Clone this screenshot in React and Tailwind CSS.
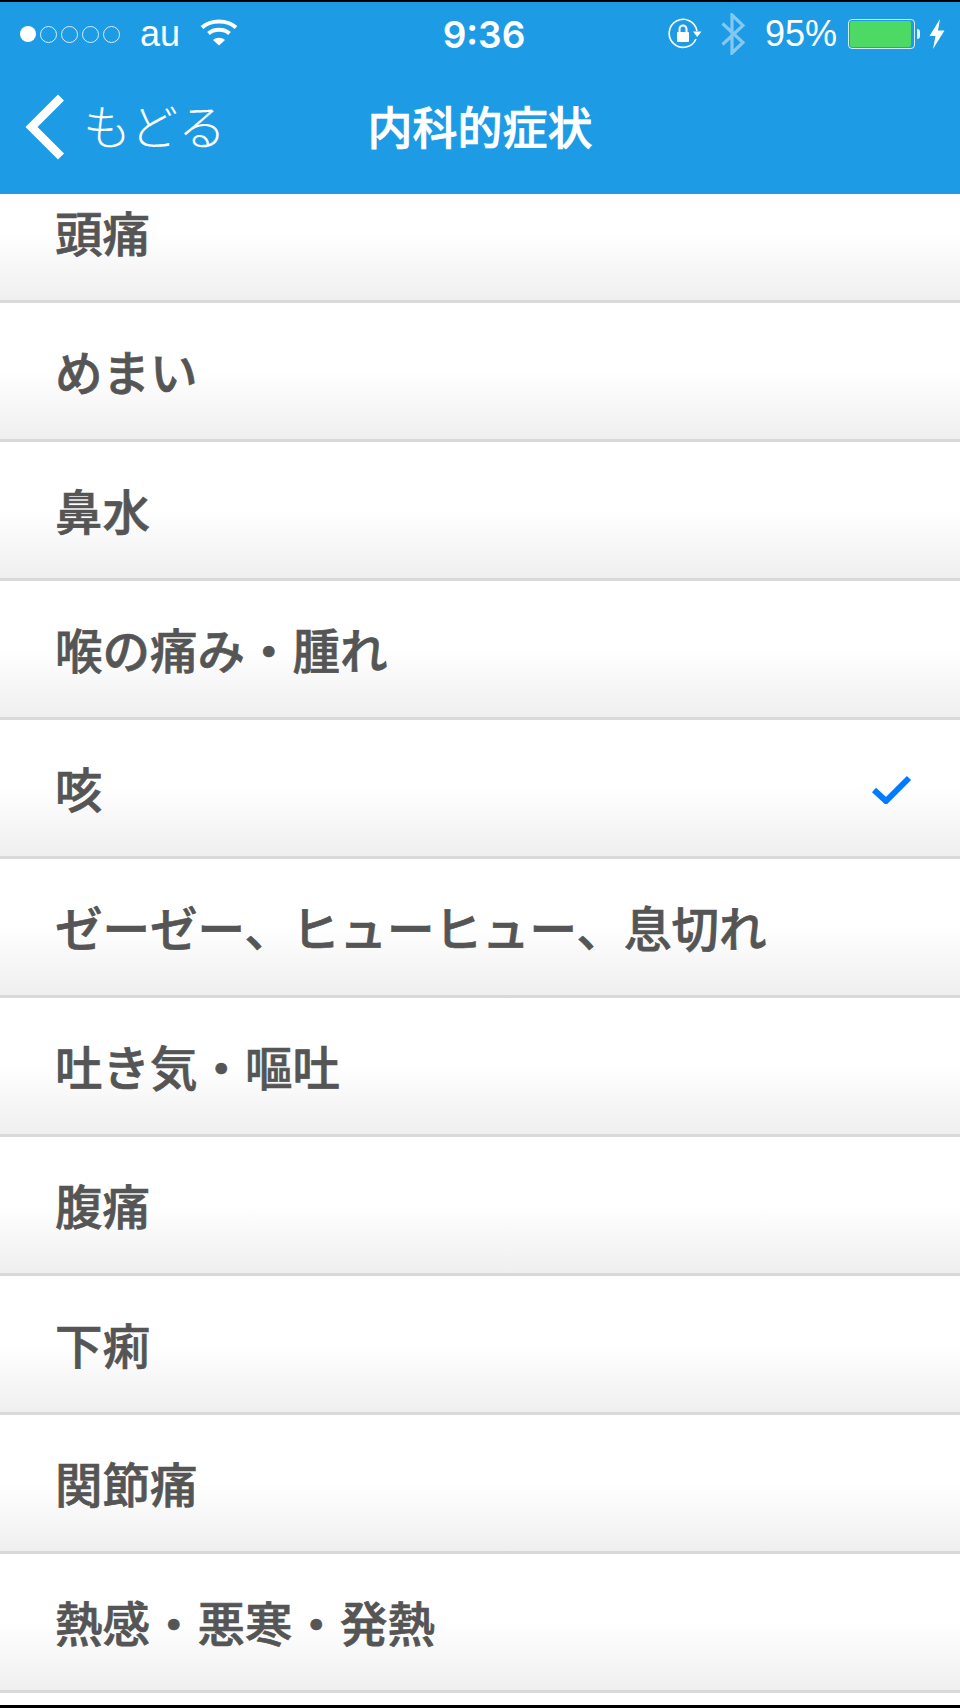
const rows = [
  { label: '頭痛' },
  { label: 'めまい' },
  { label: '鼻水' },
  { label: '喉の痛み・腫れ' },
  { label: '咳', checked: true },
  { label: 'ゼーゼー、ヒューヒュー、息切れ' },
  { label: '吐き気・嘔吐' },
  { label: '腹痛' },
  { label: '下痢' },
  { label: '関節痛' },
  { label: '熱感・悪寒・発熱' },
];

const SignalDots = () => (
  <div className="flex items-center gap-[4px]">
    <span className="w-[16px] h-[16px] rounded-full bg-white" />
    {[0, 1, 2, 3].map((i) => (
      <span key={i} className="w-[17px] h-[17px] rounded-full border border-white/80" />
    ))}
  </div>
);

const Wifi = () => (
  <svg width="38" height="28" viewBox="0 0 38 28" fill="none" stroke="white" strokeWidth="4">
    <path d="M2 9.5 C 11 1.5, 27 1.5, 36 9.5" />
    <path d="M8.5 15.5 C 14 10.5, 24 10.5, 29.5 15.5" />
    <path d="M13 22 L19 27.5 L25 22 C 21.5 19, 16.5 19, 13 22 Z" fill="white" stroke="none" />
  </svg>
);

const RotationLock = () => (
  <svg width="34" height="32" viewBox="0 0 34 32" fill="none">
    <path d="M28 21 A 14 14 0 1 1 29 13" stroke="white" strokeWidth="1.6" />
    <path d="M25 13.5 L33.5 13.5 L29.2 19 Z" fill="white" />
    <rect x="9" y="14" width="12" height="10" rx="1" fill="white" />
    <path d="M11.5 14 V11 A 3.5 3.5 0 0 1 18.5 11 V14" stroke="white" strokeWidth="2" />
  </svg>
);

const Bluetooth = () => (
  <svg width="24" height="42" viewBox="0 0 24 42" fill="none" stroke="white" strokeOpacity="0.45" strokeWidth="3.2">
    <path d="M1.5 10.5 L22 29.5 L11 40 V2 L22 12.5 L1.5 31.5" />
  </svg>
);

const Battery = () => (
  <div className="flex items-center gap-[2px]">
    <div className="w-[67px] h-[30px] rounded-[4px] border border-white/80 p-[1px] flex">
      <div className="w-[61px] rounded-[2px] bg-[#4cd964]" />
    </div>
    <div className="w-[3px] h-[10px] rounded-r-full bg-white/90" />
  </div>
);

const Bolt = () => (
  <svg width="16" height="30" viewBox="0 0 16 30" fill="white">
    <path d="M11 0 L0.5 17 H6.5 L4 30 L15.5 11.5 H9 Z" />
  </svg>
);

const StatusBar = () => (
  <div className="h-[62px] pt-[2px] grid grid-cols-[1fr_auto_1fr] items-center text-white font-['Liberation_Sans',sans-serif]">
    <div className="flex items-center pl-[20px]">
      <SignalDots />
      <span className="ml-[20px] text-[36px] leading-none">au</span>
      <div className="ml-[20px] -mt-[4px]"><Wifi /></div>
    </div>
    <div className="pl-[8px] text-[37px] leading-none font-semibold font-['Inter',sans-serif]">9:36</div>
    <div className="flex items-center justify-end pr-[15px]">
      <RotationLock />
      <div className="ml-[19px]"><Bluetooth /></div>
      <span className="ml-[20px] text-[36px] leading-none">95%</span>
      <div className="ml-[11px]"><Battery /></div>
      <div className="ml-[9px]"><Bolt /></div>
    </div>
  </div>
);

const NavBar = () => (
  <div className="h-[130px] grid grid-cols-[1fr_auto_1fr] items-center text-white font-['Noto_Sans_CJK_JP',sans-serif]">
    <div className="flex items-center pl-[25px] pb-[4px]">
      <svg width="40" height="66" viewBox="0 0 40 66" fill="none" stroke="white" strokeWidth="8.5">
        <path d="M36 3.5 L6.5 33 L36 62.5" />
      </svg>
      <span className="ml-[18px] -mt-[6px] text-[48px] leading-none font-light">もどる</span>
    </div>
    <div className="text-[45px] leading-none font-medium [-webkit-text-stroke:0.7px_white] pb-[8px]">内科的症状</div>
    <div />
  </div>
);

const Row = ({ label, checked }) => (
  <div className="h-[139px] flex items-center justify-between pl-[55px] pr-[48px] border-b-[3px] border-[#d9d9d9] bg-gradient-to-b from-white from-50% to-[#efefef]">
    <span className="text-[47.5px] leading-none font-medium text-[#555555] [-webkit-text-stroke:0.7px_#555555] font-['Noto_Sans_CJK_JP',sans-serif] pb-[1px]">{label}</span>
    {checked && (
      <svg width="40" height="32" viewBox="0 0 40 32" fill="none" stroke="#007aff" strokeWidth="6">
        <path d="M2 18 L14 29 L37 6" />
      </svg>
    )}
  </div>
);

export default function App() {
  return (
    <div className="w-[960px] h-[1708px] overflow-hidden flex flex-col bg-white border-t-2 border-b-[3px] border-black">
      <div className="bg-[#1d9ce5] shrink-0">
        <StatusBar />
        <NavBar />
      </div>
      <div className="flex-1 overflow-hidden">
        <div className="-mt-[30px]">
          {rows.map((r) => (
            <Row key={r.label} label={r.label} checked={r.checked} />
          ))}
        </div>
      </div>
    </div>
  );
}
